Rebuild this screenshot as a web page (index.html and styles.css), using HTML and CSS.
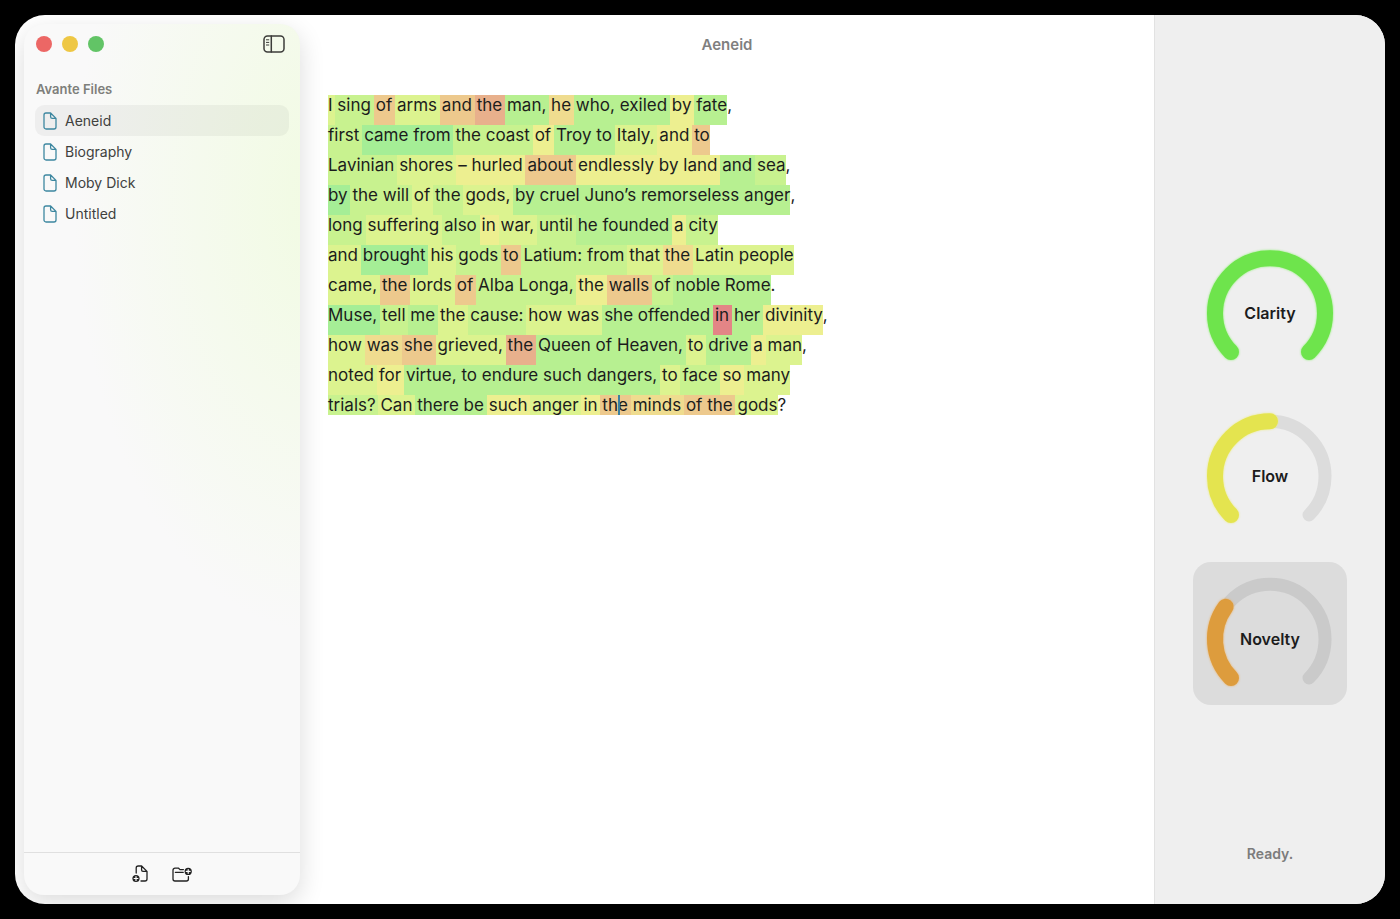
FILE: index.html
```
<!DOCTYPE html>
<html lang="en">
<head>
    <meta charset="utf-8">
    <title>Aeneid</title>
    <link rel="stylesheet" href="styles.css">
</head>
<body>
    <svg class="sprite">
        <symbol id="doc" viewBox="0 0 14 18">
            <path d="M3 1H7.6L13 6.4V15a2 2 0 0 1-2 2H3a2 2 0 0 1-2-2V3a2 2 0 0 1 2-2z M7.6 1.2V4.8a1.6 1.6 0 0 0 1.6 1.6H13" />
        </symbol>
    </svg>
    <div class="window">
        <aside class="sidebar">
            <div class="sidebar_hd">
                <div class="lights">
                    <button class="light red" aria-label="Close"></button>
                    <button class="light yellow" aria-label="Minimize"></button>
                    <button class="light green" aria-label="Zoom"></button>
                </div>
                <button class="icon_btn" aria-label="Toggle sidebar">
                    <svg width="22" height="18" viewBox="0 0 22 18">
                        <rect x="1" y="1" width="20" height="16" rx="3.5" />
                        <path d="M8.3 1V17" />
                        <path class="thin" d="M3.4 4.8H5.8M3.4 7.4H5.8M3.4 10H5.8" />
                    </svg>
                </button>
            </div>
            <h2 class="group">Avante Files</h2>
            <nav class="files">
                <a class="file active" href="#aeneid"><svg class="doc" width="14" height="18"><use href="#doc" /></svg>Aeneid</a>
                <a class="file" href="#biography"><svg class="doc" width="14" height="18"><use href="#doc" /></svg>Biography</a>
                <a class="file" href="#moby-dick"><svg class="doc" width="14" height="18"><use href="#doc" /></svg>Moby Dick</a>
                <a class="file" href="#untitled"><svg class="doc" width="14" height="18"><use href="#doc" /></svg>Untitled</a>
            </nav>
            <div class="sidebar_ft">
                <button class="icon_btn" aria-label="New file">
                    <svg width="16" height="18" viewBox="0 0 16 18">
                        <path d="M4.2 8V3a2 2 0 0 1 2-2H9.6L15 6.4V14a2 2 0 0 1-2 2H9 M9.6 1.2V5a1.4 1.4 0 0 0 1.4 1.4H15" />
                        <circle class="dot" cx="4" cy="13.5" r="3.6" />
                        <path class="plus" d="M4 11.6V15.4M2.1 13.5H5.9" />
                    </svg>
                </button>
                <button class="icon_btn" aria-label="New folder">
                    <svg width="20" height="18" viewBox="0 0 20 18">
                        <path d="M11.4 4.6H8L6.6 3.2H3A2 2 0 0 0 1 5.2V14a2 2 0 0 0 2 2H14.4a2 2 0 0 0 2-2V11.6 M3.4 7.4H11.2" />
                        <circle class="dot" cx="16.2" cy="6.4" r="3.6" />
                        <path class="plus" d="M16.2 4.5V8.3M14.3 6.4H18.1" />
                    </svg>
                </button>
            </div>
        </aside>
        <main class="main">
            <h1 class="title">Aeneid</h1>
            <div class="editor" contenteditable="true" spellcheck="false">
                <p><mark class="s4">I </mark><mark class="s3">sing </mark><mark class="s7">of </mark><mark class="s4">arms </mark><mark class="s7">and </mark><mark class="s8">the </mark><mark class="s2">man, </mark><mark class="s6">he </mark><mark class="s2">who, </mark><mark class="s2">exiled </mark><mark class="s5">by </mark><mark class="s2">fate</mark>,</p>
                <p><mark class="s3">first </mark><mark class="s1">came </mark><mark class="s1">from </mark><mark class="s3">the </mark><mark class="s3">coast </mark><mark class="s5">of </mark><mark class="s2">Troy </mark><mark class="s2">to </mark><mark class="s4">Italy, </mark><mark class="s5">and </mark><mark class="s7">to</mark></p>
                <p><mark class="s3">Lavinian </mark><mark class="s4">shores </mark><mark class="s5">– </mark><mark class="s5">hurled </mark><mark class="s7">about </mark><mark class="s5">endlessly </mark><mark class="s5">by </mark><mark class="s5">land </mark><mark class="s2">and </mark><mark class="s3">sea</mark>,</p>
                <p><mark class="s1">by </mark><mark class="s3">the </mark><mark class="s3">will </mark><mark class="s4">of </mark><mark class="s3">the </mark><mark class="s4">gods, </mark><mark class="s2">by </mark><mark class="s2">cruel </mark><mark class="s2">Juno’s </mark><mark class="s2">remorseless </mark><mark class="s2">anger</mark>,</p>
                <p><mark class="s3">long </mark><mark class="s4">suffering </mark><mark class="s3">also </mark><mark class="s5">in </mark><mark class="s4">war, </mark><mark class="s3">until </mark><mark class="s2">he </mark><mark class="s2">founded </mark><mark class="s5">a </mark><mark class="s3">city</mark></p>
                <p><mark class="s4">and </mark><mark class="s1">brought </mark><mark class="s4">his </mark><mark class="s3">gods </mark><mark class="s7">to </mark><mark class="s3">Latium: </mark><mark class="s3">from </mark><mark class="s4">that </mark><mark class="s6">the </mark><mark class="s4">Latin </mark><mark class="s4">people</mark></p>
                <p><mark class="s4">came, </mark><mark class="s7">the </mark><mark class="s4">lords </mark><mark class="s7">of </mark><mark class="s3">Alba </mark><mark class="s3">Longa, </mark><mark class="s5">the </mark><mark class="s7">walls </mark><mark class="s3">of </mark><mark class="s2">noble </mark><mark class="s2">Rome</mark>.</p>
                <p><mark class="s1">Muse, </mark><mark class="s3">tell </mark><mark class="s2">me </mark><mark class="s4">the </mark><mark class="s3">cause: </mark><mark class="s4">how </mark><mark class="s4">was </mark><mark class="s2">she </mark><mark class="s2">offended </mark><mark class="s9">in </mark><mark class="s2">her </mark><mark class="s5">divinity</mark>,</p>
                <p><mark class="s4">how </mark><mark class="s6">was </mark><mark class="s7">she </mark><mark class="s4">grieved, </mark><mark class="s8">the </mark><mark class="s2">Queen </mark><mark class="s2">of </mark><mark class="s2">Heaven, </mark><mark class="s4">to </mark><mark class="s2">drive </mark><mark class="s5">a </mark><mark class="s4">man</mark>,</p>
                <p><mark class="s4">noted </mark><mark class="s5">for </mark><mark class="s2">virtue, </mark><mark class="s2">to </mark><mark class="s2">endure </mark><mark class="s2">such </mark><mark class="s2">dangers, </mark><mark class="s4">to </mark><mark class="s3">face </mark><mark class="s5">so </mark><mark class="s4">many</mark></p>
                <p class="last"><mark class="s3">trials? </mark><mark class="s4">Can </mark><mark class="s2">there </mark><mark class="s2">be </mark><mark class="s5">such </mark><mark class="s4">anger </mark><mark class="s5">in </mark><mark class="s7">th<i class="caret"></i>e </mark><mark class="s6">minds </mark><mark class="s7">of </mark><mark class="s7">the </mark><mark class="s4">gods</mark>?</p>
            </div>
        </main>
        <aside class="scores">
            <div class="gauges">
                <button class="gauge">
                    <svg viewBox="0 0 154 143">
                        <path class="track" d="M38 116A55 55 0 1 1 116 116" />
                        <path class="value clarity" pathLength="100" stroke-dasharray="100 200" d="M38 116A55 55 0 1 1 116 116" />
                    </svg>
                    <span>Clarity</span>
                </button>
                <button class="gauge">
                    <svg viewBox="0 0 154 143">
                        <path class="track" d="M38 116A55 55 0 1 1 116 116" />
                        <path class="value flow" pathLength="100" stroke-dasharray="50 200" d="M38 116A55 55 0 1 1 116 116" />
                    </svg>
                    <span>Flow</span>
                </button>
                <button class="gauge active">
                    <svg viewBox="0 0 154 143">
                        <path class="track" d="M38 116A55 55 0 1 1 116 116" />
                        <path class="value novelty" pathLength="100" stroke-dasharray="30 200" d="M38 116A55 55 0 1 1 116 116" />
                    </svg>
                    <span>Novelty</span>
                </button>
            </div>
            <div class="status">Ready.</div>
        </aside>
    </div>
</body>
</html>
```
FILE: styles.css
```
* { box-sizing: border-box; }
body { margin: 0; padding: 15px; height: 100vh; background: #000; font-family: Inter, "Liberation Sans", sans-serif; color: #1c1c1c; }
button { border: 0; padding: 0; background: none; font: inherit; color: inherit; }
h1, h2, p { margin: 0; }
.sprite { display: none; }
.window { display: flex; height: 100%; background: #fff; border-radius: 30px; overflow: hidden; }

/* sidebar */
.sidebar { width: 276px; margin: 9px; margin-right: 0; display: flex; flex-direction: column; border-radius: 20px; background: radial-gradient(ellipse 90% 50% at 108% 20%, #f1fbe2, rgba(249, 249, 249, 0) 100%), #f9f9f9; box-shadow: 0 8px 26px rgba(0, 0, 0, .14); }
.sidebar_hd { display: flex; justify-content: space-between; align-items: center; padding: 10px 15px 0 12px; height: 30px; }
.lights { display: flex; gap: 10px; }
.light { width: 16px; height: 16px; border-radius: 50%; }
.red { background: #ec6765; }
.yellow { background: #eec744; }
.green { background: #62c466; }
.icon_btn svg { display: block; fill: none; stroke: #3c3c3a; stroke-width: 1.5; stroke-linecap: round; stroke-linejoin: round; }
.icon_btn .thin { stroke-width: 1; }
.group { margin: 25px 12px 6px; font-size: 13px; line-height: 20px; font-weight: 600; color: #7e7f7b; }
.files { flex: 1; padding: 0 11px; }
.file { display: flex; align-items: center; gap: 8px; height: 31px; padding-left: 8px; border-radius: 9px; font-size: 14px; color: #40413e; text-decoration: none; }
.file.active { background: rgba(0, 0, 0, .045); }
.doc { fill: none; stroke: #3d87a0; stroke-width: 1.3; stroke-linejoin: round; }
.sidebar_ft { display: flex; justify-content: center; align-items: center; gap: 24px; height: 43px; border-top: 1px solid #e0e0e0; }
.sidebar_ft svg { stroke: #222; stroke-width: 1.3; }
.sidebar_ft .dot { fill: #222; stroke: none; }
.sidebar_ft .plus { stroke: #fff; stroke-width: 1.2; }

/* editor */
.main { flex: 1; min-width: 0; }
.title { padding-top: 20px; text-align: center; font-size: 15px; line-height: 20px; font-weight: 600; color: #7f7f7f; }
.editor { padding: 40px 28px; font-size: 17px; line-height: 20px; outline: none; }
.editor p { display: flex; height: 30px; white-space: pre; }
.editor mark { position: relative; color: inherit; }
.editor mark + mark { margin-left: -2px; padding-left: 2px; }
.editor .last { height: 20px; }
.s1 { background: #a5ee96; }
.s2 { background: #b7f091; }
.s3 { background: #c8f28f; }
.s4 { background: #dcf38f; }
.s5 { background: #edef90; }
.s6 { background: #efdc8f; }
.s7 { background: #edc98d; }
.s8 { background: #e8b08c; }
.s9 { background: #e38586; }
.caret { position: absolute; top: 0; width: 2px; height: 20px; background: #3a80a0; }

/* scores */
.scores { width: 231px; display: flex; flex-direction: column; background: #efefef; border-left: 1px solid #e2e2e2; }
.gauges { flex: 1; display: flex; flex-direction: column; justify-content: center; align-items: center; gap: 20px; padding-top: 82px; }
.gauge { display: grid; width: 154px; height: 143px; border-radius: 18px; font-size: 16px; font-weight: 600; }
.gauge.active { background: #dcdcdc; }
.gauge svg, .gauge span { grid-area: 1 / 1; }
.gauge span { align-self: center; padding-top: 11px; }
.gauge path { fill: none; stroke-linecap: round; }
.track { stroke: #dcdcdc; stroke-width: 13; }
.active .track { stroke: #cacaca; }
.value { stroke-width: 16; }
.clarity { stroke: #6ee44c; filter: drop-shadow(0 0 1px #8cf070); }
.flow { stroke: #e4e44f; filter: drop-shadow(0 0 1px #ecec80); }
.novelty { stroke: #dd9c3d; filter: drop-shadow(0 0 1px #eeb060); }
.status { padding-bottom: 40px; text-align: center; font-size: 14px; line-height: 20px; font-weight: 600; color: #7c7c7c; }
```
